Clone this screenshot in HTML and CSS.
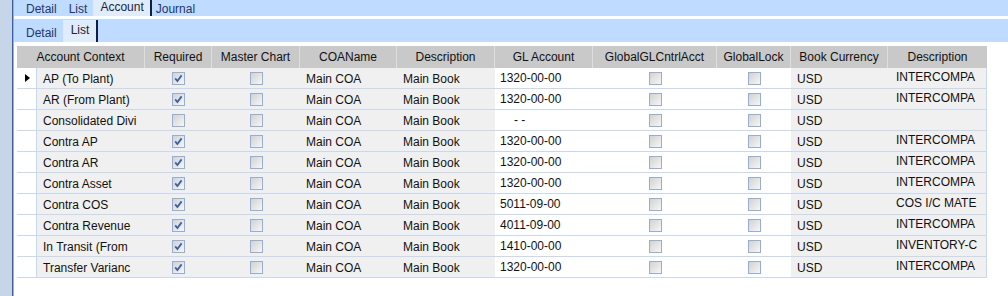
FILE: index.html
```html
<!DOCTYPE html>
<html lang="en">
<head>
    <meta charset="UTF-8">
    <title>Account Context List</title>
    <link rel="stylesheet" href="styles.css">
</head>
<body>
    <div class="shell">
        <div class="sidebar"></div>
        <div class="main">
            <div class="tabbar top">
                <span class="tab">Detail</span>
                <span class="tab">List</span>
                <span class="tab active">Account</span>
                <span class="tab last">Journal</span>
            </div>
            <div class="tabbar sub">
                <span class="tab">Detail</span>
                <span class="tab active">List</span>
            </div>

            <div class="grid-wrap">
                <table class="grid">
                    <colgroup>
                        <col style="width:20px">
                        <col style="width:108px">
                        <col style="width:67px">
                        <col style="width:88px">
                        <col style="width:97px">
                        <col style="width:98px">
                        <col style="width:98px">
                        <col style="width:124px">
                        <col style="width:74px">
                        <col style="width:97px">
                        <col style="width:99px">
                    </colgroup>
                    <thead>
                        <tr>
                            <th colspan="2">Account Context</th>
                            <th>Required</th>
                            <th>Master Chart</th>
                            <th>COAName</th>
                            <th>Description</th>
                            <th>GL Account</th>
                            <th>GlobalGLCntrlAcct</th>
                            <th>GlobalLock</th>
                            <th>Book Currency</th>
                            <th>Description</th>
                        </tr>
                    </thead>
                    <tbody>
                        <tr>
                            <td class="rowhdr"><span class="pointer"></span></td>
                            <td class="ro">AP (To Plant)</td>
                            <td class="ro chk"><span class="cb on"><svg viewBox="0 0 11 11"><path d="M2.2 5.4 L4.4 8 L8.6 2.4"/></svg></span></td>
                            <td class="ro chk"><span class="cb"></span></td>
                            <td class="ro">Main COA</td>
                            <td class="ro">Main Book</td>
                            <td class="ed gl">1320-00-00</td>
                            <td class="ed chk"><span class="cb"></span></td>
                            <td class="ed chk"><span class="cb"></span></td>
                            <td class="ro">USD</td>
                            <td class="ro desc">INTERCOMPA</td>
                        </tr>
                        <tr>
                            <td class="rowhdr"></td>
                            <td class="ro">AR (From Plant)</td>
                            <td class="ro chk"><span class="cb on"><svg viewBox="0 0 11 11"><path d="M2.2 5.4 L4.4 8 L8.6 2.4"/></svg></span></td>
                            <td class="ro chk"><span class="cb"></span></td>
                            <td class="ro">Main COA</td>
                            <td class="ro">Main Book</td>
                            <td class="ed gl">1320-00-00</td>
                            <td class="ed chk"><span class="cb"></span></td>
                            <td class="ed chk"><span class="cb"></span></td>
                            <td class="ro">USD</td>
                            <td class="ro desc">INTERCOMPA</td>
                        </tr>
                        <tr>
                            <td class="rowhdr"></td>
                            <td class="ro">Consolidated Divi</td>
                            <td class="ro chk"><span class="cb"></span></td>
                            <td class="ro chk"><span class="cb"></span></td>
                            <td class="ro">Main COA</td>
                            <td class="ro">Main Book</td>
                            <td class="ed gl empty">-&nbsp;-</td>
                            <td class="ed chk"><span class="cb"></span></td>
                            <td class="ed chk"><span class="cb"></span></td>
                            <td class="ro">USD</td>
                            <td class="ro desc"></td>
                        </tr>
                        <tr>
                            <td class="rowhdr"></td>
                            <td class="ro">Contra AP</td>
                            <td class="ro chk"><span class="cb on"><svg viewBox="0 0 11 11"><path d="M2.2 5.4 L4.4 8 L8.6 2.4"/></svg></span></td>
                            <td class="ro chk"><span class="cb"></span></td>
                            <td class="ro">Main COA</td>
                            <td class="ro">Main Book</td>
                            <td class="ed gl">1320-00-00</td>
                            <td class="ed chk"><span class="cb"></span></td>
                            <td class="ed chk"><span class="cb"></span></td>
                            <td class="ro">USD</td>
                            <td class="ro desc">INTERCOMPA</td>
                        </tr>
                        <tr>
                            <td class="rowhdr"></td>
                            <td class="ro">Contra AR</td>
                            <td class="ro chk"><span class="cb on"><svg viewBox="0 0 11 11"><path d="M2.2 5.4 L4.4 8 L8.6 2.4"/></svg></span></td>
                            <td class="ro chk"><span class="cb"></span></td>
                            <td class="ro">Main COA</td>
                            <td class="ro">Main Book</td>
                            <td class="ed gl">1320-00-00</td>
                            <td class="ed chk"><span class="cb"></span></td>
                            <td class="ed chk"><span class="cb"></span></td>
                            <td class="ro">USD</td>
                            <td class="ro desc">INTERCOMPA</td>
                        </tr>
                        <tr>
                            <td class="rowhdr"></td>
                            <td class="ro">Contra Asset</td>
                            <td class="ro chk"><span class="cb on"><svg viewBox="0 0 11 11"><path d="M2.2 5.4 L4.4 8 L8.6 2.4"/></svg></span></td>
                            <td class="ro chk"><span class="cb"></span></td>
                            <td class="ro">Main COA</td>
                            <td class="ro">Main Book</td>
                            <td class="ed gl">1320-00-00</td>
                            <td class="ed chk"><span class="cb"></span></td>
                            <td class="ed chk"><span class="cb"></span></td>
                            <td class="ro">USD</td>
                            <td class="ro desc">INTERCOMPA</td>
                        </tr>
                        <tr>
                            <td class="rowhdr"></td>
                            <td class="ro">Contra COS</td>
                            <td class="ro chk"><span class="cb on"><svg viewBox="0 0 11 11"><path d="M2.2 5.4 L4.4 8 L8.6 2.4"/></svg></span></td>
                            <td class="ro chk"><span class="cb"></span></td>
                            <td class="ro">Main COA</td>
                            <td class="ro">Main Book</td>
                            <td class="ed gl">5011-09-00</td>
                            <td class="ed chk"><span class="cb"></span></td>
                            <td class="ed chk"><span class="cb"></span></td>
                            <td class="ro">USD</td>
                            <td class="ro desc">COS I/C MATE</td>
                        </tr>
                        <tr>
                            <td class="rowhdr"></td>
                            <td class="ro">Contra Revenue</td>
                            <td class="ro chk"><span class="cb on"><svg viewBox="0 0 11 11"><path d="M2.2 5.4 L4.4 8 L8.6 2.4"/></svg></span></td>
                            <td class="ro chk"><span class="cb"></span></td>
                            <td class="ro">Main COA</td>
                            <td class="ro">Main Book</td>
                            <td class="ed gl">4011-09-00</td>
                            <td class="ed chk"><span class="cb"></span></td>
                            <td class="ed chk"><span class="cb"></span></td>
                            <td class="ro">USD</td>
                            <td class="ro desc">INTERCOMPA</td>
                        </tr>
                        <tr>
                            <td class="rowhdr"></td>
                            <td class="ro">In Transit (From</td>
                            <td class="ro chk"><span class="cb on"><svg viewBox="0 0 11 11"><path d="M2.2 5.4 L4.4 8 L8.6 2.4"/></svg></span></td>
                            <td class="ro chk"><span class="cb"></span></td>
                            <td class="ro">Main COA</td>
                            <td class="ro">Main Book</td>
                            <td class="ed gl">1410-00-00</td>
                            <td class="ed chk"><span class="cb"></span></td>
                            <td class="ed chk"><span class="cb"></span></td>
                            <td class="ro">USD</td>
                            <td class="ro desc">INVENTORY-C</td>
                        </tr>
                        <tr>
                            <td class="rowhdr"></td>
                            <td class="ro">Transfer Varianc</td>
                            <td class="ro chk"><span class="cb on"><svg viewBox="0 0 11 11"><path d="M2.2 5.4 L4.4 8 L8.6 2.4"/></svg></span></td>
                            <td class="ro chk"><span class="cb"></span></td>
                            <td class="ro">Main COA</td>
                            <td class="ro">Main Book</td>
                            <td class="ed gl">1320-00-00</td>
                            <td class="ed chk"><span class="cb"></span></td>
                            <td class="ed chk"><span class="cb"></span></td>
                            <td class="ro">USD</td>
                            <td class="ro desc">INTERCOMPA</td>
                        </tr>
                    </tbody>
                </table>
            </div>
        </div>
    </div>
</body>
</html>
```

FILE: styles.css
```css
body {
  margin: 0;
  padding: 0;
  background: #fff;
  font-family: 'Liberation Sans', Arial, sans-serif;
  font-size: 12px;
  color: #111;
}
.shell {
  display: flex;
  height: 296px;
  overflow: hidden;
}
.sidebar {
  width: 12px;
  flex: none;
  background: #c7d5e9;
  border-right: 1px solid #3f5f9c;
  box-shadow: 1px 0 0 #98b1d8;
  margin-right: 1px;
}
.main {
  flex: 1;
  min-width: 0;
}

/* tab strips */
.tabbar {
  display: flex;
  align-items: stretch;
  background: #bfdbff;
  padding-left: 6px;
  color: #24366a;
}
.tabbar.top {
  height: 16px;
  margin-bottom: 3px;
}
.tabbar.sub {
  height: 23px;
  margin-bottom: 4px;
}
.tab {
  display: flex;
  align-items: center;
  padding: 2px 6px 0 6px;
}
.tabbar.sub .tab {
  padding-top: 4px;
}
.tab.active {
  background: #e1ecfa;
  border-right: 2px solid #0e1e46;
  color: #1a2340;
}
.tabbar.top .tab.active {
  padding: 0 6px 2px 7px;
}
.tabbar.top .tab.last {
  padding-left: 4px;
}
.tabbar.sub .tab.active {
  margin-top: 1px;
  padding: 0 7px 3px 8px;
}

/* data grid */
.grid-wrap {
  padding-left: 3px;
}
.grid {
  table-layout: fixed;
  border-collapse: separate;
  border-spacing: 0;
  width: 970px;
}
.grid th {
  height: 22px;
  box-sizing: border-box;
  padding: 0 2px;
  background: #c9c9c9;
  border-right: 1px solid #dedede;
  font-weight: normal;
  text-align: center;
  color: #111;
  white-space: nowrap;
  overflow: hidden;
}
.grid th:last-child {
  border-right: none;
}
.grid td {
  height: 21px;
  box-sizing: border-box;
  padding: 2px 0 0 6px;
  border-bottom: 1px solid #c7d8f0;
  white-space: nowrap;
  overflow: hidden;
  vertical-align: middle;
}
.grid td:last-child {
  border-right: 1px solid #c7d8f0;
}
.grid td.rowhdr {
  background: #fff;
  border-right: 1px solid #c7d8f0;
  padding: 0 0 0 8px;
}
.grid td.ro {
  background: #f0f0f0;
}
.grid td.ed {
  background: #fff;
}
.grid td.gl {
  padding: 0 0 0 5px;
}
.grid td.empty {
  padding-left: 19px;
}
.grid td.desc {
  padding: 0 0 3px 8px;
}
.grid td.chk {
  padding: 0 0 1px 0;
  text-align: center;
}
.pointer {
  display: block;
  width: 0;
  height: 0;
  border-left: 5px solid #000;
  border-top: 4px solid transparent;
  border-bottom: 4px solid transparent;
}

/* grey flat checkboxes */
.cb {
  display: inline-block;
  width: 11px;
  height: 11px;
  border: 1px solid #97aed0;
  background: linear-gradient(135deg, #d2d2d2, #f6f6f6);
  vertical-align: middle;
}
.cb svg {
  display: block;
  width: 11px;
  height: 11px;
}
.cb svg path {
  fill: none;
  stroke: #3d60a6;
  stroke-width: 1.8;
}
```
